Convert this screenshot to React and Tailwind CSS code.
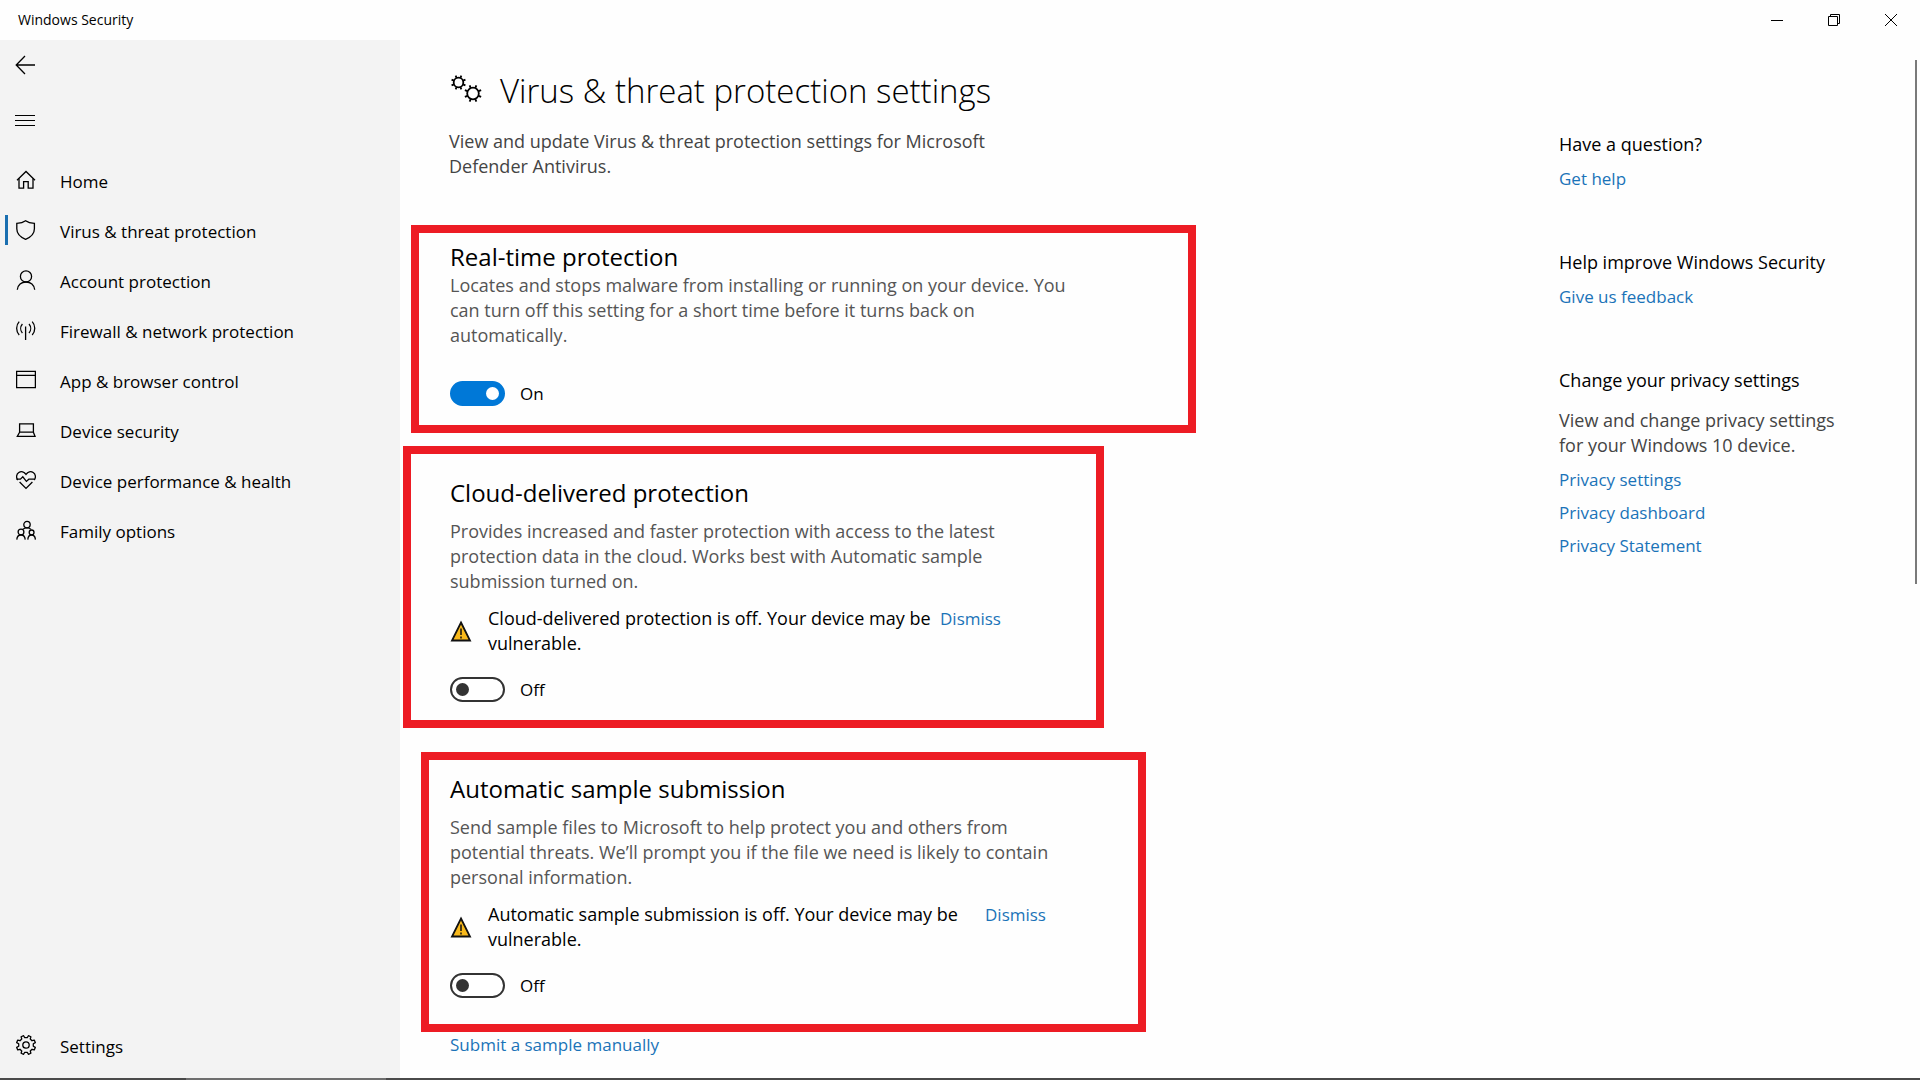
import React, { useState } from "react";

// points around a cog: "teeth" teeth between the inner and outer radius
const cogPath = (cx, cy, inner, outer, teeth) => {
  const step = (Math.PI * 2) / teeth;
  const point = (radius, angle) =>
    `${(cx + radius * Math.cos(angle)).toFixed(2)} ${(cy + radius * Math.sin(angle)).toFixed(2)}`;
  const points = [];
  for (let i = 0; i < teeth; i++) {
    const a = i * step + step / 2;
    points.push(point(inner, a - step * 0.28));
    points.push(point(outer, a - step * 0.18));
    points.push(point(outer, a + step * 0.18));
    points.push(point(inner, a + step * 0.28));
  }
  return `M${points.join("L")}Z`;
};

// short strokes around a ring
const spokesPath = (cx, cy, inner, outer, count) => {
  let d = "";
  for (let i = 0; i < count; i++) {
    const a = ((i + 0.5) * Math.PI * 2) / count;
    const x = Math.cos(a);
    const y = Math.sin(a);
    d += `M${(cx + inner * x).toFixed(2)} ${(cy + inner * y).toFixed(2)}L${(cx + outer * x).toFixed(2)} ${(cy + outer * y).toFixed(2)}`;
  }
  return d;
};

const Icon = ({ children }) => (
  <svg
    viewBox="0 0 20 20"
    className="w-5 h-5 shrink-0"
    fill="none"
    stroke="currentColor"
    strokeWidth="1.3"
    aria-hidden="true"
  >
    {children}
  </svg>
);

const icons = {
  back: <path d="M20 10H1.2M10 1 1.2 10l8.8 9" />,
  menu: <path d="M0 5.5h20M0 10.5h20M0 15.5h20" strokeWidth="1" />,
  home: (
    <>
      <path d="M1 10.300 10 1.500l9 8.800" />
      <path d="M3 8.500v9.600h4.600v-6.400h4.600v6.400H17V8.500" />
    </>
  ),
  shield: (
    <path d="M9.6.8C7.4 2.5 4.4 3.3.8 3.4v5.4c0 4.9 3.2 8.3 8.8 10.5 5.6-2.2 8.8-5.6 8.8-10.5V3.4C14.8 3.3 11.8 2.5 9.6.8Z" />
  ),
  person: (
    <>
      <circle cx="10" cy="6.4" r="5.6" />
      <path d="M1.3 19.8C1.7 15 5.4 12 10 12s8.3 3 8.7 7.8" />
    </>
  ),
  firewall: (
    <path d="M9.6 6.5V20M3.2 1.6C-.2 5.2-.2 11.4 3.2 15M16.2 1.6c3.4 3.6 3.4 9.8 0 13.4M6.4 4c-2.2 2.6-2.2 6.4 0 9M13 4c2.2 2.6 2.2 6.4 0 9" />
  ),
  browser: <path d="M.6 1.4h18.8v16.2H.6zM.6 5.4h18.8" />,
  laptop: <path d="M3.6 3.8h13.8v8.4H3.6zM3.6 12.2 1.3 16.4h17.8l-1.7-4.2" />,
  heart: (
    <>
      <path d="M1.8 10C-.2 7.4.4 4 2.8 2.5 5.2 1 8.2 1.8 10 4.4c1.8-2.6 4.8-3.4 7.2-1.9 2.4 1.5 3 4.9 1 7.5" />
      <path d="M.4 9.2h4l2.4-2.4 3.6 4.6 2.4-2.2h5.6M3.6 12 10 18.4l6.4-6.4" />
    </>
  ),
  family: (
    <>
      <circle cx="11" cy="4.6" r="3.2" />
      <circle cx="5" cy="12" r="2.9" />
      <circle cx="15.6" cy="12.4" r="2.4" />
      <path d="M.8 19.6c.2-3 1.8-4.6 4.2-4.6s4 1.6 4.2 4.6M11.8 19.6c.2-3 1.6-4.6 3.8-4.6s3.6 1.6 3.8 4.6M7 9.2c1-1 2.4-1.4 4-1.4s3 .4 4 1.6" />
    </>
  ),
  settings: (
    <>
      <path d={cogPath(10, 10, 7.4, 9.6, 8)} strokeLinejoin="round" />
      <circle cx="10" cy="10" r="3.2" />
    </>
  ),
};

const navItems = [
  { label: "Home", icon: "home" },
  { label: "Virus & threat protection", icon: "shield" },
  { label: "Account protection", icon: "person" },
  { label: "Firewall & network protection", icon: "firewall" },
  { label: "App & browser control", icon: "browser" },
  { label: "Device security", icon: "laptop" },
  { label: "Device performance & health", icon: "heart" },
  { label: "Family options", icon: "family" },
];

const NavItem = ({ label, icon, active }) => (
  <a href="#" className="flex h-[50px] items-center pl-[5px] hover:bg-black/5">
    <span className={`mb-[2px] h-[30px] w-[3px] ${active ? "bg-[#1a6fb0]" : ""}`} />
    <span className="mb-[2px] ml-2">
      <Icon>{icons[icon]}</Icon>
    </span>
    <span className="ml-6">{label}</span>
  </a>
);

const TextLink = ({ children }) => (
  <a href="#" className="text-[17px] text-[#1a73b8] hover:underline">
    {children}
  </a>
);

const Toggle = ({ label, defaultOn }) => {
  const [on, setOn] = useState(Boolean(defaultOn));

  return (
    <label className="flex h-[25px] w-fit items-center gap-[15px]">
      <input
        type="checkbox"
        role="switch"
        aria-label={label}
        checked={on}
        onChange={() => setOn(!on)}
        className="flex h-[25px] w-[55px] appearance-none items-center rounded-full border-2 border-[#333] bg-white px-1 before:h-[13px] before:w-[13px] before:rounded-full before:bg-[#333] checked:justify-end checked:border-[#0078d7] checked:bg-[#0078d7] checked:before:bg-white"
      />
      <span className="text-[17px]">{on ? "On" : "Off"}</span>
    </label>
  );
};

const Warning = ({ children, className }) => (
  <div className="mt-3 flex">
    <svg viewBox="0 0 22 22" className="mt-[14px] h-[22px] w-[22px] shrink-0" aria-hidden="true">
      <path d="M11 2.5 20 20.5H2Z" fill="#f8b91c" stroke="#111" strokeWidth="1.8" />
      <path d="M11 8.5v6.5M11 16.5v2" stroke="#111" strokeWidth="1.5" />
    </svg>
    <p className={`ml-4 ${className}`}>{children}</p>
    <div>
      <TextLink>Dismiss</TextLink>
    </div>
  </div>
);

const Sidebar = () => (
  <aside className="flex w-[400px] shrink-0 flex-col bg-[#f3f3f3] pb-[7px] text-[17px]">
    <button aria-label="Back" className="flex h-[50px] w-[50px] items-center justify-center">
      <Icon>{icons.back}</Icon>
    </button>
    <button aria-label="Menu" className="mt-[5px] flex h-[50px] w-[50px] items-center justify-center">
      <Icon>{icons.menu}</Icon>
    </button>
    <nav className="mt-[11px] flex flex-1 flex-col">
      {navItems.map((item) => (
        <NavItem key={item.label} {...item} active={item.icon === "shield"} />
      ))}
      <div className="mt-auto">
        <NavItem label="Settings" icon="settings" />
      </div>
    </nav>
  </aside>
);

const TitleBar = () => (
  <header className="flex h-10 items-center justify-between pr-px pl-[18px]">
    <span className="text-sm">Windows Security</span>
    <div className="flex">
      {[
        ["Minimize", "M0 6.5h12"],
        ["Restore", "M.5 2.5h9v9h-9zM2.5 2.5v-2h9v9h-2"],
        ["Close", "M0 0l12 12M12 0 0 12"],
      ].map(([name, d]) => (
        <button key={name} aria-label={name} className="flex h-10 w-[57px] items-center justify-center">
          <svg viewBox="0 0 12 12" className="h-3 w-3" fill="none" stroke="#000" aria-hidden="true">
            <path d={d} />
          </svg>
        </button>
      ))}
    </div>
  </header>
);

const HelpPanel = () => (
  <aside className="w-[356px] shrink-0 pt-[92px]">
    <h2>Have a question?</h2>
    <div className="mt-[9px]">
      <TextLink>Get help</TextLink>
    </div>
    <h2 className="mt-[59px]">Help improve Windows Security</h2>
    <div className="mt-[9px]">
      <TextLink>Give us feedback</TextLink>
    </div>
    <h2 className="mt-[59px]">Change your privacy settings</h2>
    <p className="mt-[15px] text-[#444]">
      View and change privacy settings
      <br />
      for your Windows 10 device.
    </p>
    <ul className="mt-[9px] flex flex-col gap-2">
      <li>
        <TextLink>Privacy settings</TextLink>
      </li>
      <li>
        <TextLink>Privacy dashboard</TextLink>
      </li>
      <li>
        <TextLink>Privacy Statement</TextLink>
      </li>
    </ul>
  </aside>
);

const App = () => {
  return (
    <div className="flex min-h-screen flex-col bg-[#fefefe] font-['Open_Sans','Noto_Sans',sans-serif] text-[18px] leading-[25px] text-black">
      <TitleBar />
      <div className="flex flex-1">
        <Sidebar />
        <main className="min-w-0 flex-1 pt-[27px]">
          <div className="flex h-12 items-center pl-[50px]">
            <svg viewBox="0 0 32 32" className="h-8 w-8" fill="none" stroke="#000" strokeWidth="1.8" aria-hidden="true">
              <circle cx="8.5" cy="7.5" r="4.8" />
              <path d={spokesPath(8.5, 7.5, 5, 7.5, 8)} />
              <circle cx="23" cy="18.5" r="5.8" />
              <path d={spokesPath(23, 18.5, 6, 8.8, 8)} />
            </svg>
            <h1 className="ml-[18px] text-[33px] leading-[48px] font-light">
              Virus &amp; threat protection settings
            </h1>
          </div>
          <p className="mt-[14px] pl-[49px] text-[#444]">
            View and update Virus &amp; threat protection settings for Microsoft
            <br />
            Defender Antivirus.
          </p>

          <section className="mt-[46px] ml-[11px] max-w-[785px] border-8 border-[#ed1c24] pt-2 pb-[19px] pl-[31px]">
            <h2 className="text-2xl">Real-time protection</h2>
            <p className="mb-[33px] text-[#555]">
              Locates and stops malware from installing or running on your device. You
              <br />
              can turn off this setting for a short time before it turns back on
              <br />
              automatically.
            </p>
            <Toggle label="Real-time protection" defaultOn />
          </section>

          <section className="mt-[13px] ml-[3px] max-w-[701px] border-8 border-[#ed1c24] pt-[23px] pb-[18px] pl-[39px]">
            <h2 className="text-2xl">Cloud-delivered protection</h2>
            <p className="mt-[10px] text-[#555]">
              Provides increased and faster protection with access to the latest
              <br />
              protection data in the cloud. Works best with Automatic sample
              <br />
              submission turned on.
            </p>
            <Warning className="w-[452px]">
              Cloud-delivered protection is off. Your device may be
              <br />
              vulnerable.
            </Warning>
            <div className="mt-[21px]">
              <Toggle label="Cloud-delivered protection" />
            </div>
          </section>

          <section className="mt-6 ml-[21px] max-w-[725px] border-8 border-[#ed1c24] pt-[13px] pb-[26px] pl-[21px]">
            <h2 className="text-2xl">Automatic sample submission</h2>
            <p className="mt-[10px] text-[#555]">
              Send sample files to Microsoft to help protect you and others from
              <br />
              potential threats. We’ll prompt you if the file we need is likely to contain
              <br />
              personal information.
            </p>
            <Warning className="w-[497px]">
              Automatic sample submission is off. Your device may be
              <br />
              vulnerable.
            </Warning>
            <div className="mt-[21px]">
              <Toggle label="Automatic sample submission" />
            </div>
          </section>
          <div className="pl-[50px]">
            <TextLink>Submit a sample manually</TextLink>
          </div>
        </main>
        <HelpPanel />
        <div className="mt-5 mr-[3px] h-[524px] w-[2px] bg-[#7a7a7a]" />
      </div>
      <div className="flex h-[2px] bg-[#4a4a4a]">
        <div className="ml-[186px] w-[200px] bg-[#6e6e6e]" />
      </div>
    </div>
  );
};

export default App;
